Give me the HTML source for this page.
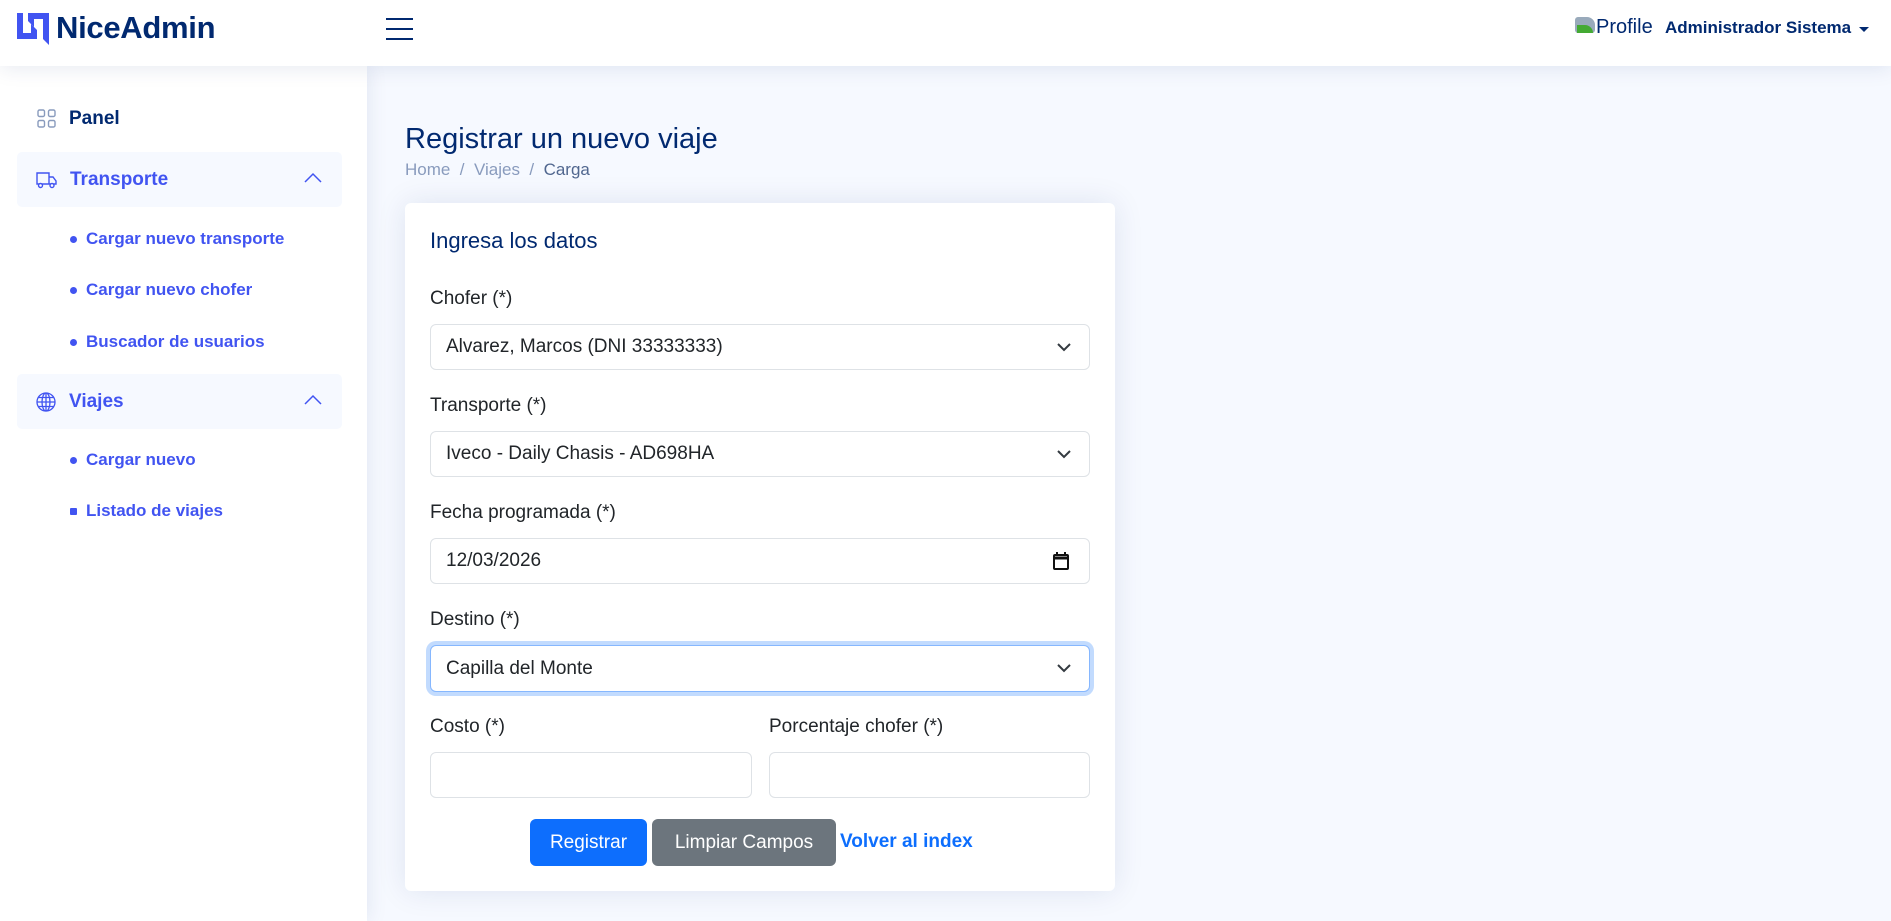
<!DOCTYPE html>
<html><head><meta charset="utf-8"><style>
*{box-sizing:border-box;margin:0;padding:0}
body{width:1891px;height:921px;overflow:hidden;background:#f6f9ff;font-family:"Liberation Sans",sans-serif;position:relative}
.abs{position:absolute}
header{position:absolute;left:0;top:0;width:1891px;height:66px;background:#fff;box-shadow:0 2px 20px rgba(1,41,112,.1);z-index:2}
aside{position:absolute;left:0;top:66px;width:367px;height:855px;background:#fff;box-shadow:0 0 20px rgba(1,41,112,.1)}
.nav{position:absolute;left:17px;width:325px;height:55px;border-radius:5px;font-size:19px;font-weight:bold;display:flex;align-items:center}
.sub{position:absolute;left:70px;font-size:17px;font-weight:bold;color:#4154f1;display:flex;align-items:center}
.sub i{display:inline-block;width:7px;height:7px;border-radius:50%;background:#4154f1;margin-right:9px}
.lbl{position:absolute;left:430px;font-size:19px;color:#212529}
.inp{position:absolute;height:46px;border:1px solid #dee2e6;border-radius:6px;background:#fff;font-size:19px;color:#212529;padding-left:15px;display:flex;align-items:center}
.chev{position:absolute;right:18px;top:17px}
.btn{position:absolute;top:819px;height:47px;border-radius:6px;color:#fff;font-size:19px;display:flex;align-items:center;justify-content:center}
</style></head><body>
<header>
<svg class="abs" style="left:17px;top:13px" width="32" height="32" viewBox="0 0 32 32"><path d="M0 0h6v20h8v-9l6 6v9H0z" fill="#4154f1"/><path d="M11 0h21v32l-6-6V6h-9v8l-6-6z" fill="#4154f1"/></svg>
<div class="abs" style="left:56px;top:10px;font-size:31px;font-weight:bold;color:#012970;letter-spacing:-0.3px">NiceAdmin</div>
<div class="abs" style="left:386px;top:18px;width:27px;height:2px;background:#012970"></div>
<div class="abs" style="left:386px;top:28px;width:27px;height:2px;background:#012970"></div>
<div class="abs" style="left:386px;top:38px;width:27px;height:2px;background:#012970"></div>
<div class="abs" style="left:1575px;top:17px;width:20px;height:16px;background:#9ab;border-radius:3px 8px 3px 3px"></div>
<div class="abs" style="left:1577px;top:25px;width:16px;height:8px;background:#4a3;border-radius:0 8px 0 0"></div>
<div class="abs" style="left:1596px;top:16px;font-size:20px;color:#012970">Profile</div>
<div class="abs" style="left:1665px;top:18px;font-size:17px;font-weight:bold;color:#012970">Administrador Sistema</div>
<div class="abs" style="left:1859px;top:27px;border-left:5px solid transparent;border-right:5px solid transparent;border-top:5px solid #012970"></div>
</header>
<aside></aside>
<div class="nav" style="top:91px;color:#012970">
<svg style="margin-left:20px" width="19" height="19" viewBox="0 0 19 19" fill="none" stroke="#899bbd" stroke-width="1.4"><rect x="1" y="1" width="6.5" height="6.5" rx="1.5"/><rect x="11.5" y="1" width="6.5" height="6.5" rx="1.5"/><rect x="1" y="11.5" width="6.5" height="6.5" rx="1.5"/><rect x="11.5" y="11.5" width="6.5" height="6.5" rx="1.5"/></svg>
<span style="margin-left:13px">Panel</span></div>
<div class="nav" style="top:152px;background:#f6f9ff;color:#4154f1">
<svg style="margin-left:19px" width="21" height="18" viewBox="0 0 21 18" fill="none" stroke="#4154f1" stroke-width="1.4"><path d="M1 2h12v11H1z M13 6h4l3 4v3h-7"/><circle cx="4.5" cy="14.5" r="2" fill="#fff"/><circle cx="16" cy="14.5" r="2" fill="#fff"/></svg>
<span style="margin-left:13px">Transporte</span>
<svg class="abs" style="left:287px;top:20px" width="18" height="12" viewBox="0 0 18 12" fill="none" stroke="#4154f1" stroke-width="1.5"><path d="M1 10l8-8 8 8"/></svg></div>
<div class="sub" style="top:229px"><i></i>Cargar nuevo transporte</div>
<div class="sub" style="top:280px"><i></i>Cargar nuevo chofer</div>
<div class="sub" style="top:332px"><i></i>Buscador de usuarios</div>
<div class="nav" style="top:374px;background:#f6f9ff;color:#4154f1">
<svg style="margin-left:19px" width="20" height="20" viewBox="0 0 20 20" fill="none" stroke="#4154f1" stroke-width="1.3"><circle cx="10" cy="10" r="9"/><ellipse cx="10" cy="10" rx="4" ry="9"/><path d="M1 10h18M2.5 5.5h15M2.5 14.5h15M10 1v18"/></svg>
<span style="margin-left:13px">Viajes</span>
<svg class="abs" style="left:287px;top:20px" width="18" height="12" viewBox="0 0 18 12" fill="none" stroke="#4154f1" stroke-width="1.5"><path d="M1 10l8-8 8 8"/></svg></div>
<div class="sub" style="top:450px"><i></i>Cargar nuevo</div>
<div class="sub" style="top:501px"><i style="border-radius:1px"></i>Listado de viajes</div>

<div class="abs" style="left:405px;top:123px;font-size:29px;color:#012970">Registrar un nuevo viaje</div>
<div class="abs" style="left:405px;top:160px;font-size:17px;color:#899bbd">Home &nbsp;/&nbsp; Viajes &nbsp;/&nbsp; <span style="color:#51678f">Carga</span></div>

<div class="abs" style="left:405px;top:203px;width:710px;height:688px;background:#fff;border-radius:6px;box-shadow:0 0 30px rgba(1,41,112,.1)"></div>
<div class="abs" style="left:430px;top:228px;font-size:22px;color:#012970">Ingresa los datos</div>

<div class="lbl" style="top:288px">Chofer (*)</div>
<div class="inp" style="left:430px;top:324px;width:660px">Alvarez, Marcos (DNI 33333333)<svg class="chev" width="14" height="10" viewBox="0 0 14 10" fill="none" stroke="#343a40" stroke-width="2"><path d="M1 2l6 6 6-6"/></svg></div>
<div class="lbl" style="top:395px">Transporte (*)</div>
<div class="inp" style="left:430px;top:431px;width:660px">Iveco - Daily Chasis - AD698HA<svg class="chev" width="14" height="10" viewBox="0 0 14 10" fill="none" stroke="#343a40" stroke-width="2"><path d="M1 2l6 6 6-6"/></svg></div>
<div class="lbl" style="top:502px">Fecha programada (*)</div>
<div class="inp" style="left:430px;top:538px;width:660px">12/03/2026<svg class="abs" style="right:20px;top:13px" width="16" height="18" viewBox="0 0 16 18" fill="none" stroke="#111" stroke-width="2"><rect x="1" y="3" width="14" height="14" rx="1"/><path d="M1 6h14" stroke-width="3"/><path d="M4 0v3M12 0v3"/></svg></div>
<div class="lbl" style="top:609px">Destino (*)</div>
<div class="inp" style="left:430px;top:645px;width:660px;height:47px;border-color:#86b7fe;box-shadow:0 0 0 4px rgba(13,110,253,.25)">Capilla del Monte<svg class="chev" width="14" height="10" viewBox="0 0 14 10" fill="none" stroke="#343a40" stroke-width="2"><path d="M1 2l6 6 6-6"/></svg></div>
<div class="lbl" style="top:716px">Costo (*)</div>
<div class="lbl" style="top:716px;left:769px">Porcentaje chofer (*)</div>
<div class="inp" style="left:430px;top:752px;width:322px"></div>
<div class="inp" style="left:769px;top:752px;width:321px"></div>

<div class="btn" style="left:530px;width:117px;background:#0d6efd">Registrar</div>
<div class="btn" style="left:652px;width:184px;background:#6c757d">Limpiar Campos</div>
<div class="abs" style="left:840px;top:831px;font-size:19px;font-weight:bold;color:#0d6efd">Volver al index</div>
</body></html>
